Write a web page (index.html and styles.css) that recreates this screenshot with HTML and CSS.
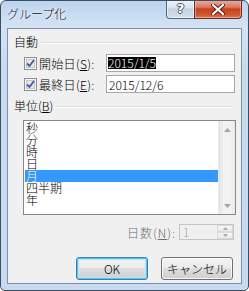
FILE: index.html
```html
<!DOCTYPE html>
<html lang="ja">
<head>
<meta charset="utf-8">
<title>グループ化</title>
<link rel="stylesheet" href="styles.css">
</head>
<body>
<div class="window">
  <div class="titlebar">
    <span class="title">グループ化</span>
    <div class="caption-buttons">
      <div class="cap help"><span>?</span></div>
      <div class="cap close">
        <svg width="14" height="11" viewBox="0 0 14 11"><path d="M2 1 L12 10 M12 1 L2 10" stroke="#5b1a10" stroke-width="4" stroke-linecap="round"/><path d="M2 1 L12 10 M12 1 L2 10" stroke="#fff" stroke-width="2.2" stroke-linecap="round"/></svg>
      </div>
    </div>
  </div>
  <div class="client">
    <div class="group-header"><span class="gh-label">自動</span><div class="rule"></div></div>
    <div class="date-row">
      <span class="checkbox"><svg width="13" height="13" viewBox="0 0 13 13"><rect x="0.5" y="0.5" width="12" height="12" fill="#f4f4f4" stroke="#8f8f8f"/><rect x="2.5" y="2.5" width="8" height="8" fill="#e6e6e6" stroke="#c6c6c6"/><path d="M3 6.5 L5.5 9 L10 3" fill="none" stroke="#3d5aa6" stroke-width="1.8"/></svg></span>
      <span class="field-label">開始日(<u>S</u>):</span>
      <div class="textbox"><span class="sel">2015/1/5</span></div>
    </div>
    <div class="date-row second">
      <span class="checkbox"><svg width="13" height="13" viewBox="0 0 13 13"><rect x="0.5" y="0.5" width="12" height="12" fill="#f4f4f4" stroke="#8f8f8f"/><rect x="2.5" y="2.5" width="8" height="8" fill="#e6e6e6" stroke="#c6c6c6"/><path d="M3 6.5 L5.5 9 L10 3" fill="none" stroke="#3d5aa6" stroke-width="1.8"/></svg></span>
      <span class="field-label">最終日(<u>E</u>):</span>
      <div class="textbox"><span class="val">2015/12/6</span></div>
    </div>
    <div class="group-header unit"><span class="gh-label">単位(<u>B</u>)</span><div class="rule"></div></div>
    <div class="listbox">
      <div class="items">
        <div class="item">秒</div>
        <div class="item">分</div>
        <div class="item">時</div>
        <div class="item">日</div>
        <div class="item selected">月</div>
        <div class="item">四半期</div>
        <div class="item">年</div>
      </div>
      <div class="scrollbar">
        <svg width="7" height="4" viewBox="0 0 7 4"><path d="M0 4 L3.5 0 L7 4 Z" fill="#a6a6a6"/></svg>
        <svg width="7" height="4" viewBox="0 0 7 4"><path d="M0 0 L3.5 4 L7 0 Z" fill="#a6a6a6"/></svg>
      </div>
    </div>
    <div class="spin-row">
      <span class="spin-label">日数(<u>N</u>):</span>
      <div class="spinbox">
        <span class="spin-val">1</span>
        <div class="spin-btns">
          <div class="spin-btn"><svg width="5" height="3" viewBox="0 0 5 3"><path d="M0 3 L2.5 0 L5 3 Z" fill="#a9a9a9"/></svg></div>
          <div class="spin-btn"><svg width="5" height="3" viewBox="0 0 5 3"><path d="M0 0 L2.5 3 L5 0 Z" fill="#a9a9a9"/></svg></div>
        </div>
      </div>
    </div>
    <div class="button-row">
      <div class="btn default">OK</div>
      <div class="btn">キャンセル</div>
    </div>
  </div>
</div>
</body>
</html>
```

FILE: styles.css
```css
* { box-sizing: border-box; }
html, body { margin: 0; padding: 0; background: #ffffff; }
body {
  width: 249px;
  height: 291px;
  font-family: "Noto Sans CJK JP", "Noto Sans", sans-serif;
  font-size: 12px;
  font-weight: 300;
  color: #000;
}
u { text-decoration: underline; text-underline-offset: 1px; }

.window {
  width: 249px;
  height: 291px;
  border: 1px solid #3e4e62;
  border-radius: 6px 6px 5px 5px;
  background: linear-gradient(180deg, #bcd3ee 0px, #d3e3f5 26px, #c8dbf1 60px, #c6daf1 100%);
  padding: 0 6px 6px 6px;
  display: flex;
  flex-direction: column;
  overflow: hidden;
}

.titlebar {
  height: 27px;
  flex: none;
  display: flex;
  align-items: flex-start;
  justify-content: space-between;
}
.title {
  margin-top: 6px;
  line-height: 14px;
  font-size: 12px;
  color: #101010;
  text-shadow: 0 0 5px #ffffff, 0 0 3px #ffffff;
}
.caption-buttons {
  display: flex;
  margin-top: -1px;
}
.cap {
  height: 19px;
  border: 1px solid #56667a;
  border-top: none;
  display: flex;
  align-items: center;
  justify-content: center;
}
.help {
  width: 29px;
  border-radius: 0 0 0 4px;
  background: linear-gradient(180deg, #eef3f8 0%, #d9e3ee 45%, #c3d1e1 50%, #d3dfec 100%);
  box-shadow: inset 0 0 0 1px rgba(255,255,255,0.6);
}
.help span {
  font-family: "DejaVu Sans", sans-serif;
  font-weight: bold;
  font-size: 13px;
  line-height: 14px;
  color: #ffffff;
  text-shadow: 1px 0 0 #4b5565, -1px 0 0 #4b5565, 0 1px 0 #4b5565, 0 -1px 0 #4b5565;
}
.close {
  width: 48px;
  margin-left: -1px;
  border-color: #6a2a1e;
  border-radius: 0 0 4px 0;
  background: linear-gradient(180deg, #eab0a0 0%, #d9795f 40%, #c6411d 50%, #d15a33 85%, #e08060 100%);
  box-shadow: inset 0 0 0 1px rgba(255,220,200,0.45);
}

.client {
  flex: 1;
  border: 1px solid #7e91a8;
  background: #f0f0f0;
  display: flex;
  flex-direction: column;
}

.group-header {
  margin-top: 6px;
  height: 13px;
  padding-left: 6px;
  padding-right: 8px;
  display: flex;
  align-items: center;
}
.gh-label { line-height: 13px; white-space: nowrap; }
.rule {
  flex: 1;
  height: 1px;
  margin-left: 3px;
  margin-top: 2px;
  background: #d5dfe5;
  box-shadow: 0 1px 0 #ffffff;
}

.date-row {
  margin-top: 6px;
  height: 18px;
  padding-left: 16px;
  display: flex;
  align-items: center;
}
.date-row.second { margin-top: 3px; }
.checkbox { width: 13px; height: 13px; display: flex; flex: none; }
.field-label {
  width: 67px;
  flex: none;
  margin-left: 2px;
  line-height: 13px;
  white-space: nowrap;
  letter-spacing: 0.3px;
}
.textbox {
  width: 129px;
  height: 18px;
  flex: none;
  border: 1px solid #a5a8ae;
  background: #ffffff;
  padding-left: 1px;
  display: flex;
  align-items: center;
}
.sel {
  background: #000000;
  color: #ffffff;
  line-height: 12px;
}
.val { line-height: 13px; padding-left: 1px; }

.listbox {
  margin-top: 8px;
  margin-left: 15px;
  width: 213px;
  height: 95px;
  border: 1px solid #828790;
  background: #ffffff;
  display: flex;
}
.items {
  flex: 1;
  padding: 1px 0 0 1px;
}
.item {
  height: 12px;
  line-height: 12px;
  padding-left: 1px;
  white-space: nowrap;
}
.item.selected {
  background: #3399ff;
  color: #ffffff;
}
.scrollbar {
  width: 17px;
  flex: none;
  background: linear-gradient(90deg, #e3e3e3 0%, #f2f2f2 30%, #f2f2f2 70%, #e8e8e8 100%);
  border-left: 1px solid #ebebeb;
  display: flex;
  flex-direction: column;
  justify-content: space-between;
  align-items: center;
  padding: 7px 0 6px;
}

.spin-row {
  margin-top: 9px;
  height: 16px;
  padding-right: 7px;
  display: flex;
  justify-content: flex-end;
  align-items: center;
}
.spin-label {
  color: #6d6d6d;
  line-height: 13px;
  margin-right: 3px;
  letter-spacing: 1px;
}
.spinbox {
  width: 55px;
  height: 16px;
  border: 1px solid #c2c6cc;
  background: #f0f0f0;
  display: flex;
  justify-content: space-between;
}
.spin-val {
  color: #a3a3a3;
  line-height: 14px;
  padding-left: 3px;
}
.spin-btns {
  width: 16px;
  display: flex;
  flex-direction: column;
}
.spin-btn {
  flex: 1;
  border: 1px solid #d9d9d9;
  background: linear-gradient(180deg, #f7f7f7, #e9e9e9);
  display: flex;
  align-items: center;
  justify-content: center;
}

.button-row {
  margin-top: 17px;
  height: 23px;
  padding-right: 8px;
  display: flex;
  justify-content: flex-end;
  gap: 13px;
}
.btn {
  width: 72px;
  height: 23px;
  border: 1px solid #707070;
  border-radius: 3px;
  background: linear-gradient(180deg, #f2f2f2 0%, #ebebeb 50%, #dddddd 50%, #cfcfcf 100%);
  box-shadow: inset 0 0 0 1px rgba(255,255,255,0.8);
  display: flex;
  align-items: center;
  justify-content: center;
  line-height: 14px;
}
.btn.default {
  border-color: #3c7fb1;
  box-shadow: inset 0 0 0 1px #49c6f3, inset 0 0 0 2px #b6e6fb;
}
```
